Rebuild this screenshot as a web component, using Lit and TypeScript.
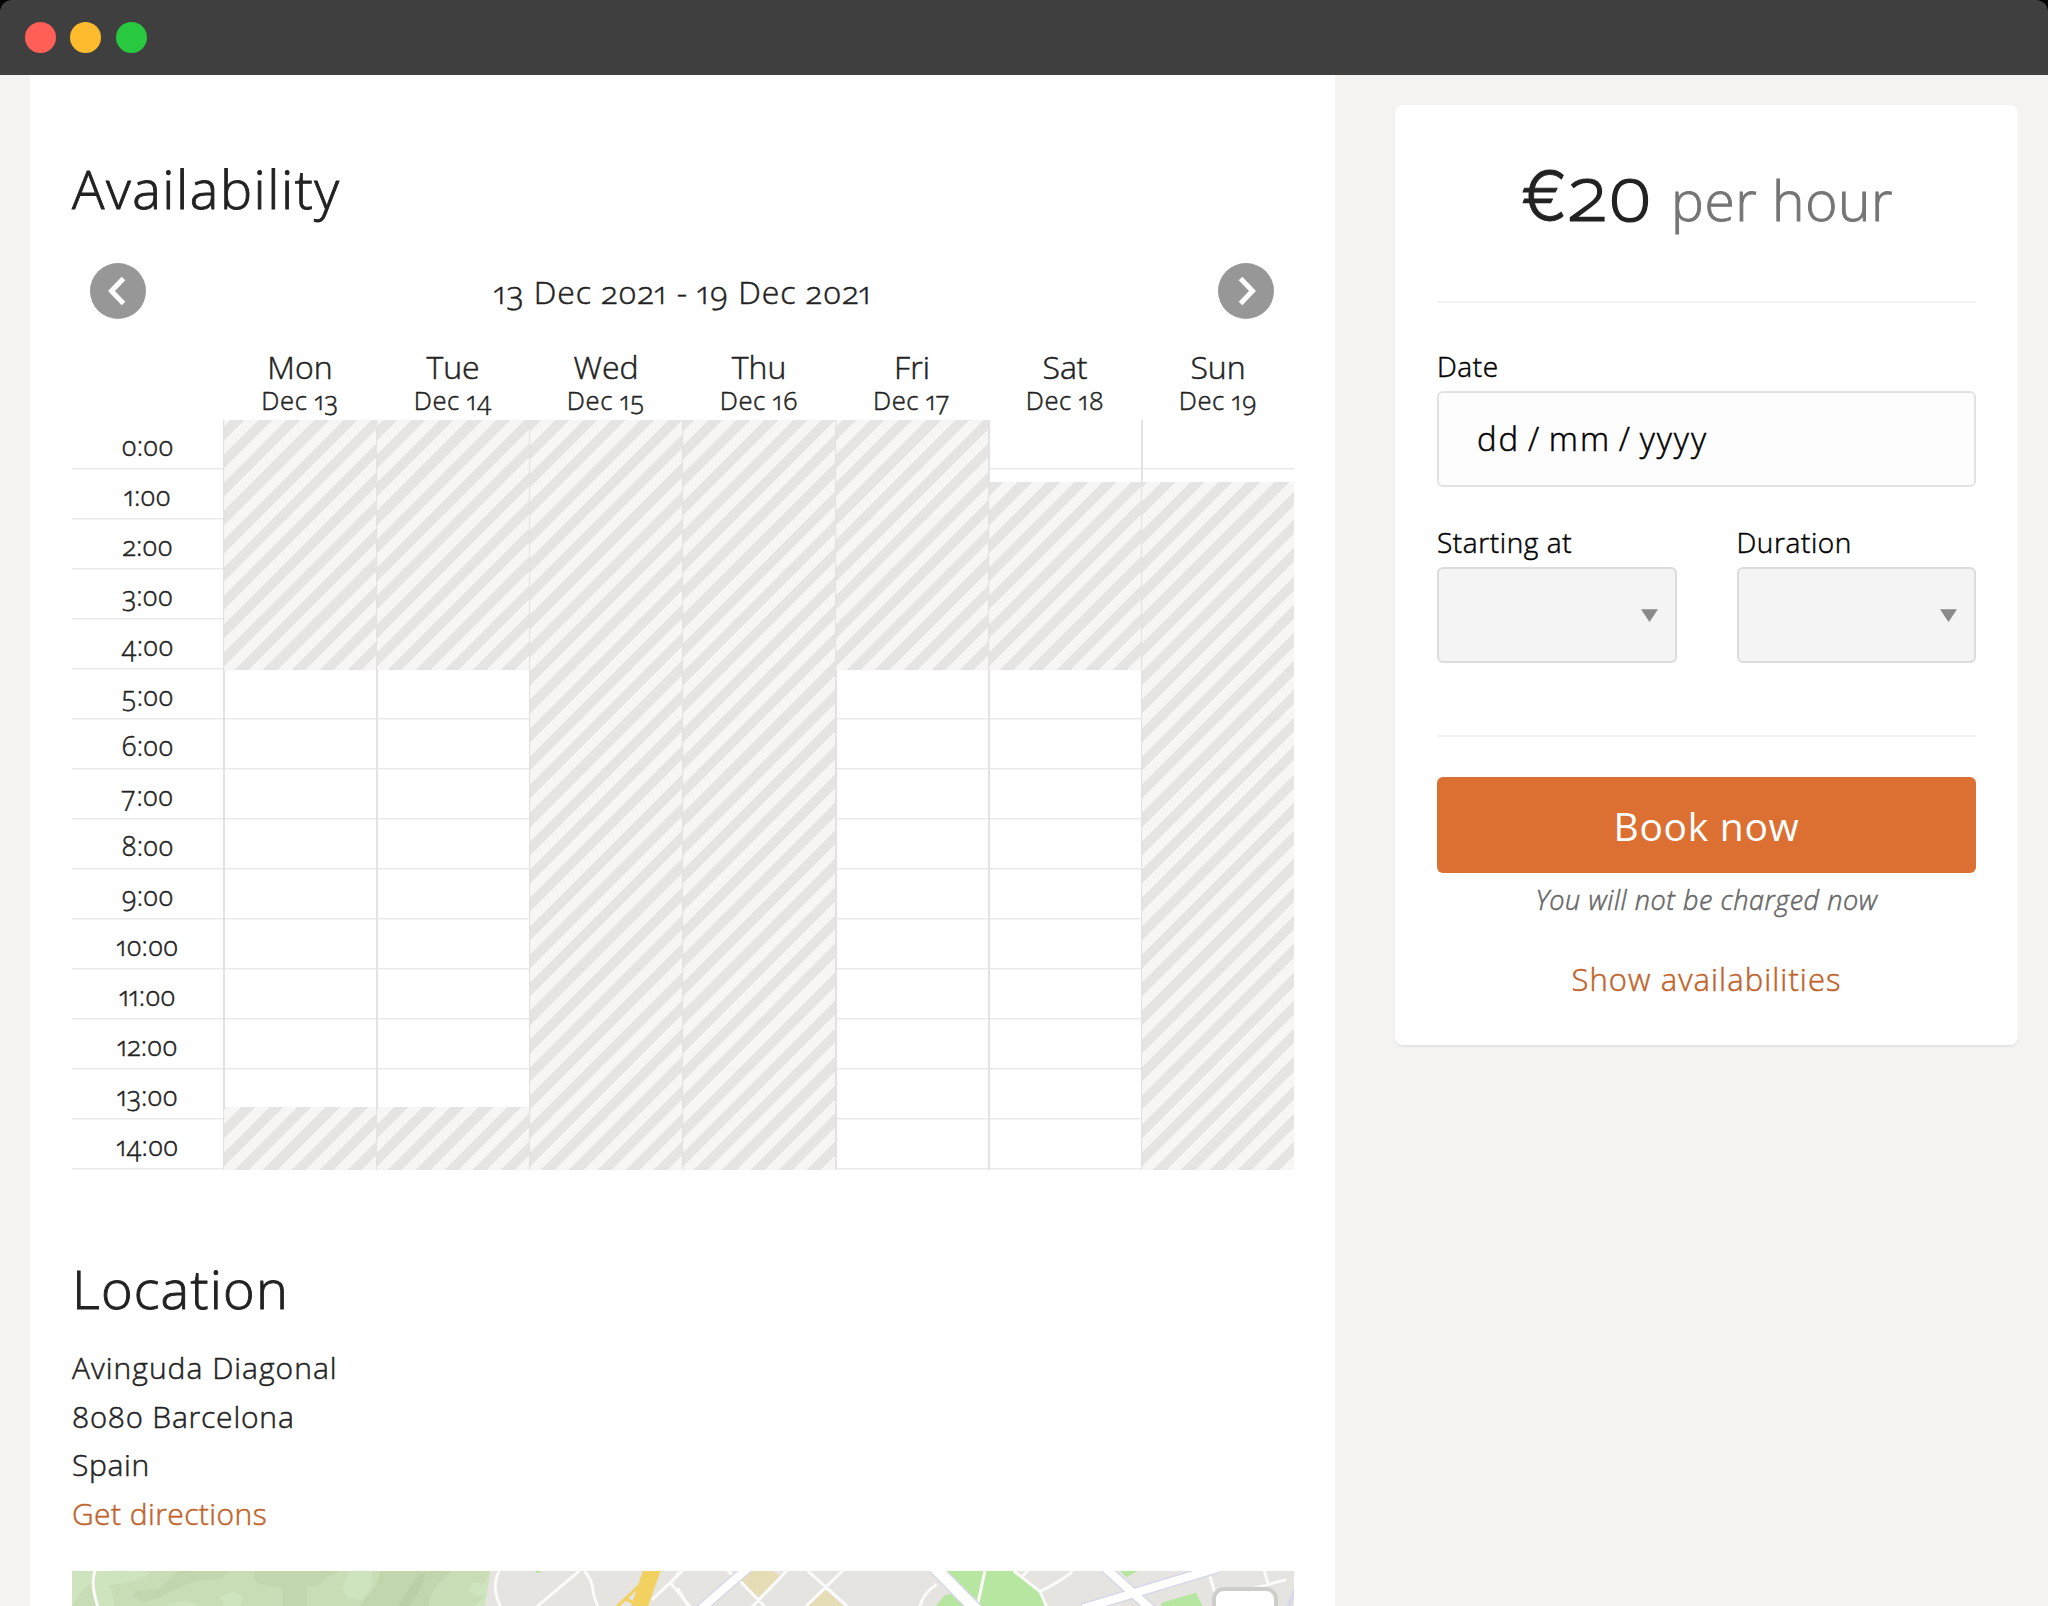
import { LitElement, html, css, svg } from "lit";
import { customElement } from "lit/decorators.js";

const HOURS = 15;
const ROW = 50;

interface Day {
  name: string;
  date: string;
  blocked: [number, number][];
}

const DAYS: Day[] = [
  { name: "Mon", date: "Dec 13", blocked: [[0, 5], [13.74, 15]] },
  { name: "Tue", date: "Dec 14", blocked: [[0, 5], [13.74, 15]] },
  { name: "Wed", date: "Dec 15", blocked: [[0, 15]] },
  { name: "Thu", date: "Dec 16", blocked: [[0, 15]] },
  { name: "Fri", date: "Dec 17", blocked: [[0, 5]] },
  { name: "Sat", date: "Dec 18", blocked: [[1.24, 5]] },
  { name: "Sun", date: "Dec 19", blocked: [[1.24, 15]] },
];

const base = css`
  :host {
    display: block;
    box-sizing: border-box;
    font-family: "Open Sans", "Noto Sans", sans-serif;
    font-weight: 300;
    font-variant-numeric: oldstyle-nums proportional-nums;
    -webkit-text-stroke-width: 0.5px;
    color: #222;
  }
  * {
    box-sizing: border-box;
  }
`;

@customElement("week-calendar")
class WeekCalendar extends LitElement {
  static styles = [
    base,
    css`
      .nav {
        display: flex;
        align-items: center;
        justify-content: space-between;
        height: 56px;
        padding: 0 20px 0 18px;
      }
      .arrow {
        display: block;
        width: 56px;
        height: 56px;
      }
      .range {
        padding: 1px 0 0 2px;
        font-size: 32px;
        letter-spacing: 0.95px;
        line-height: 56px;
      }
      .grid {
        display: grid;
        grid-template-columns: 151px repeat(7, 1fr);
      }
      .head {
        margin-top: 31px;
        height: 70px;
        text-align: center;
      }
      .title {
        padding-left: 1px;
      }
      .name {
        font-size: 32px;
        line-height: 34px;
      }
      .date {
        padding-top: 1px;
        font-size: 25.6px;
        letter-spacing: 0.6px;
        line-height: 32px;
      }
      .hour,
      .cell {
        height: 50px;
        box-shadow: inset 0 -1px #f5f5f5, inset 0 -2px #eaeaea;
      }
      .hour {
        font-size: 26.6px;
        line-height: 52px;
        text-align: center;
      }
      .day {
        position: relative;
        border-left: 2px solid #e2e2e2;
      }
      .block {
        position: absolute;
        left: -1px;
        right: 0;
        opacity: 0.92;
        background: repeating-linear-gradient(-45deg, #f6f5f3 0 10px, #e3e2e0 10px 20px);
      }
    `,
  ];

  private arrow(path: string) {
    return html`<svg class="arrow" viewBox="0 0 56 56">
      <circle cx="28" cy="28" r="28" fill="#979797"></circle>
      <path d=${path} fill="none" stroke="#fff" stroke-width="5"></path>
    </svg>`;
  }

  render() {
    return html`
      <div class="nav">
        ${this.arrow("M33.5 15.5L21.5 28L33.5 40.5")}
        <span class="range">13 Dec 2021 - 19 Dec 2021</span>
        ${this.arrow("M22.5 15.5L34.5 28L22.5 40.5")}
      </div>
      <div class="grid head">
        <div></div>
        ${DAYS.map(
          (d) => html`<div class="title">
            <div class="name">${d.name}</div>
            <div class="date">${d.date}</div>
          </div>`
        )}
      </div>
      <div class="grid">
        <div>${Array.from({ length: HOURS }, (_, h) => html`<div class="hour">${h}:00</div>`)}</div>
        ${DAYS.map(
          (d) => html`<div class="day">
            ${Array.from({ length: HOURS }, () => html`<div class="cell"></div>`)}
            ${d.blocked.map(
              ([from, to]) =>
                html`<div class="block" style="top:${from * ROW}px;height:${(to - from) * ROW}px"></div>`
            )}
          </div>`
        )}
      </div>
    `;
  }
}

@customElement("location-map")
class LocationMap extends LitElement {
  static styles = [
    base,
    css`
      .map {
        display: block;
        width: 1222px;
        height: 35px;
      }
      .map path {
        vector-effect: non-scaling-stroke;
      }
      .thin {
        fill: none;
        stroke: #fbfbfa;
        stroke-width: 3px;
      }
      .edge {
        fill: none;
        stroke: #d7d9e8;
      }
      .road {
        fill: none;
        stroke: #fff;
      }
      .w12 {
        stroke-width: 14px;
      }
      .w12.road {
        stroke-width: 11px;
      }
      .w9 {
        stroke-width: 11px;
      }
      .w9.road {
        stroke-width: 8px;
      }
    `,
  ];

  render() {
    const wide = "M585 80L690 218";
    const mids = "M160 80L45 210M975 78L1090 212M930 205L1240 84";
    return html`<svg class="map" viewBox="0 0 1222 35">
      <rect width="1222" height="35" fill="#e5e4e0"></rect>
      ${svg`<g transform="matrix(.4082 0 0 .3333 -12 -21)">
        <path fill="#cde4be" d="M29 63H1055L1040 168H29Z"/>
        <path fill="#c8dcb5" d="M29 168L60 115L78 100L88 168ZM205 63H1052L1040 100L1010 98L1000 125L1020 140L1042 138L1015 168H135L122 105L165 98L195 88L220 72Z"/>
        <path fill="#c2d6ae" d="M290 63H415L395 85L325 95L290 115L240 145L205 155L178 140L185 122L240 118L270 85ZM475 63H685L655 80L635 105L605 110V168H545V115L480 100ZM785 63H960L930 95L905 140V168H735L775 105Z"/>
        <path fill="#bbcfa6" d="M880 70L895 75L890 105L855 168H828L855 115Z"/>
        <path fill="#cde4be" d="M710 63H765V110L740 150L705 145L690 115ZM392 138L425 125L450 140L440 168H402ZM265 160L300 152L335 160V168H265ZM135 90L150 66H190L160 95Z"/>
        <path fill="#b6e69f" d="M1165 63H1177V68H1167Z"/>
        <path class="thin" d="M86 63Q74 100 92 168M1076 63Q1055 110 1080 172M1272 63L1168 170M1285 63Q1303 90 1305 115T1318 170M1525 63L1495 98L1450 150M1495 98L1545 172"/>
        <path fill="none" stroke="#f2d160" stroke-width="3" d="M1418 108L1365 170M1382 145L1405 158"/>
        <path fill="#f2d160" d="M1428 63H1471L1441 168H1399Z"/>
      </g>
      <g transform="matrix(.4337 0 0 .3333 608 -31)">
        <path fill="#e6ddb6" d="M150 93H215L232 110L182 172L140 125ZM335 150L377 198H293Z"/>
        <path fill="#b6e69f" d="M605 93H770L830 155L845 198H590L610 165L640 160ZM1015 93H1055L1030 112ZM1110 188L1190 158L1205 198H1110Z"/>
        <path class="thin" d="M248 90L165 202M110 93L140 125L197 202M295 93L388 202M377 90L288 202M-5 145L20 202M5 93L-10 105M592 133Q560 160 552 202M703 93L685 202M770 93L830 155L846 202M815 75L790 108M905 93Q895 110 830 155M1222 110L1235 165M1347 93L1357 135M1280 160L1398 119"/>
        <path class="edge w12" d=${wide} />
        <path class="edge w9" d=${mids} />
        <path class="road w12" d=${wide} />
        <path class="road w9" d=${mids} />
        <path class="edge" stroke-width="4" d="M1420 145L1402 202"/>
      </g>`}
      <rect x="1142" y="18" width="62" height="40" rx="10" fill="#fff" stroke="#cdcdc9" stroke-width="4"></rect>
    </svg>`;
  }
}

@customElement("booking-card")
class BookingCard extends LitElement {
  static styles = [
    base,
    css`
      :host {
        width: 623px;
        height: 940px;
        padding: 0 42px;
        background: #fff;
        border-radius: 8px;
        box-shadow: 0 2px 2px rgba(0, 0, 0, 0.06);
        color: #000;
      }
      .price {
        display: flex;
        align-items: baseline;
        justify-content: center;
        height: 196px;
        padding: 47px 0 0 1px;
        line-height: 80px;
        color: #222;
        white-space: nowrap;
      }
      .euro {
        font-family: Inter, "Open Sans", sans-serif;
        font-size: 70px;
        -webkit-text-stroke-width: 0.8px;
      }
      .num {
        font-size: 77px;
        letter-spacing: 1px;
        -webkit-text-stroke-width: 1.2px;
      }
      .per {
        margin-left: 18px;
        font-size: 55px;
        letter-spacing: 0.6px;
        color: #757575;
        -webkit-text-stroke-width: 0.9px;
      }
      .rule {
        height: 2px;
        background: #f3f3f3;
      }
      .field {
        display: flex;
        flex-direction: column;
        gap: 5px;
        flex: 1;
      }
      .label {
        font-size: 28px;
        line-height: 40px;
        letter-spacing: 0.6px;
      }
      .first {
        margin-top: 43px;
      }
      .input,
      .select {
        height: 96px;
        border: 2px solid #e3e3e3;
        border-radius: 6px;
        background: #fdfdfd;
      }
      .input {
        padding-left: 38px;
        font-size: 33px;
        line-height: 92px;
        letter-spacing: 1.95px;
        word-spacing: -2.8px;
      }
      .select {
        display: flex;
        align-items: center;
        justify-content: flex-end;
        padding-right: 17px;
        background: #f4f4f4;
        border-color: #dcdcdc;
      }
      .caret {
        display: block;
        width: 17px;
        height: 13px;
      }
      .pair {
        display: flex;
        gap: 60px;
        margin: 35px 0 72px;
      }
      .book {
        display: block;
        width: 100%;
        height: 96px;
        margin-top: 40px;
        padding: 2px 0 0;
        border: 0;
        border-radius: 6px;
        background: #dc7033;
        color: #fff;
        font: inherit;
        font-size: 39px;
        font-weight: 400;
        letter-spacing: 0.7px;
        line-height: 94px;
        -webkit-text-stroke-width: 0;
      }
      .note {
        margin-top: 9px;
        font-size: 27px;
        line-height: 36px;
        letter-spacing: 0.55px;
        font-style: italic;
        text-align: center;
        color: #666;
      }
      .show {
        margin-top: 40.5px;
        font-size: 31px;
        line-height: 40px;
        letter-spacing: 1.07px;
        text-align: center;
        color: #c0642c;
      }
    `,
  ];

  private select(label: string) {
    return html`<div class="field">
      <div class="label">${label}</div>
      <div class="select">
        <svg class="caret" viewBox="0 0 16 12"><path d="M0 0H16L8 12Z" fill="#8a8a8a"></path></svg>
      </div>
    </div>`;
  }

  render() {
    return html`
      <div class="price"><span class="euro">€</span><span class="num">20</span><span class="per">per hour</span></div>
      <div class="rule"></div>
      <div class="field first">
        <div class="label">Date</div>
        <div class="input">dd / mm / yyyy</div>
      </div>
      <div class="pair">${this.select("Starting at")}${this.select("Duration")}</div>
      <div class="rule"></div>
      <button class="book">Book now</button>
      <div class="note">You will not be charged now</div>
      <div class="show">Show availabilities</div>
    `;
  }
}

@customElement("app-root")
class AppRoot extends LitElement {
  static styles = [
    base,
    css`
      :host {
        height: 1606px;
        overflow: hidden;
        background: #f4f3f1;
      }
      .top {
        background: #000;
      }
      .bar {
        display: flex;
        align-items: center;
        gap: 14px;
        height: 75px;
        padding: 0 25px;
        border-radius: 12px 12px 0 0;
        background: #3f3f3f;
      }
      .dot {
        width: 31px;
        height: 31px;
        border-radius: 50%;
      }
      .red {
        background: #ff5f57;
      }
      .yellow {
        background: #febb2d;
      }
      .green {
        margin-left: 1px;
        background: #28c941;
      }
      .page {
        display: flex;
        align-items: flex-start;
        height: 1531px;
        padding: 0 30px;
        gap: 60px;
      }
      .main {
        width: 1305px;
        height: 1531px;
        overflow: hidden;
        padding: 81px 41px 0 42px;
        background: #fff;
      }
      .title {
        margin: 0;
        font-size: 54px;
        line-height: 64px;
        font-weight: 300;
        letter-spacing: 1.5px;
        -webkit-text-stroke-width: 0.9px;
      }
      .cal {
        margin-top: 43px;
      }
      .loc {
        margin-top: 86px;
        letter-spacing: 1.2px;
      }
      .address {
        margin: 24px 0 32.2px;
        font-size: 30px;
        line-height: 48.7px;
      }
      .street {
        letter-spacing: 1px;
      }
      .city {
        letter-spacing: 0.8px;
      }
      .country {
        letter-spacing: 0.65px;
      }
      .link {
        letter-spacing: 0.42px;
        color: #c0642c;
      }
      .side {
        margin-top: 30px;
      }
    `,
  ];

  render() {
    return html`
      <div class="top">
        <div class="bar">
          <span class="dot red"></span><span class="dot yellow"></span><span class="dot green"></span>
        </div>
      </div>
      <div class="page">
        <div class="main">
          <h2 class="title">Availability</h2>
          <week-calendar class="cal"></week-calendar>
          <h2 class="title loc">Location</h2>
          <div class="address">
            <div class="street">Avinguda Diagonal</div>
            <div class="city">8080 Barcelona</div>
            <div class="country">Spain</div>
            <div class="link">Get directions</div>
          </div>
          <location-map></location-map>
        </div>
        <booking-card class="side"></booking-card>
      </div>
    `;
  }
}
